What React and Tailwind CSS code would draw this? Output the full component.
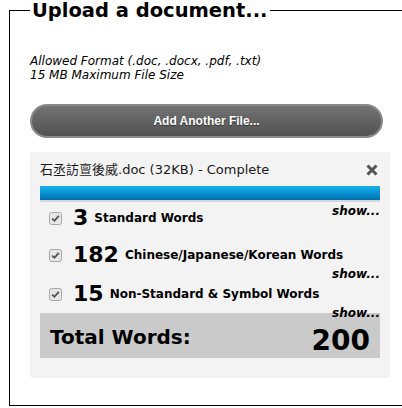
import React from 'react';

const rows = [
  { count: 3, label: 'Standard Words' },
  { count: 182, label: 'Chinese/Japanese/Korean Words' },
  { count: 15, label: 'Non-Standard & Symbol Words' },
];

const CheckBox = () => (
  <svg width="13" height="13" viewBox="0 0 13 13" className="shrink-0">
    <rect x="0.5" y="0.5" width="12" height="12" rx="2" fill="#e6e6e6" stroke="#a8a8a8" />
    <path d="M3.2 6.6 L5.4 8.8 L9.8 3.8" fill="none" stroke="#505050" strokeWidth="1.8" />
  </svg>
);

const ShowLink = ({ className = '' }) => (
  <div className={`text-right text-[12px] leading-[14px] font-bold italic text-black ${className}`}>show...</div>
);

const WordRow = ({ count, label }) => (
  <div className="flex items-center">
    <div className="ml-[9px] mr-[11px] flex items-center">
      <CheckBox />
    </div>
    <span className="text-[22px] leading-[24px] font-bold">{count}</span>
    <span className="ml-[6px] text-[12px] leading-[24px] font-bold">{label}</span>
  </div>
);

export default function App() {
  return (
    <div className="w-[402px] h-[408px] bg-white text-black font-['DejaVu_Sans',sans-serif] overflow-hidden">
      <fieldset className="-mt-px ml-[9px] w-[391px] h-[407px] border border-black px-[20px]">
        <legend className="px-[2px] pt-[2px] text-[19.5px] leading-[20px] font-bold">Upload a document...</legend>

        <div className="mt-[33px] text-[12px] leading-[14px] italic">
          <div>Allowed Format (.doc, .docx, .pdf, .txt)</div>
          <div>15 MB Maximum File Size</div>
        </div>

        <button className="mt-[22px] w-[353px] h-[34px] rounded-full border-2 border-[#8a8a8a] bg-linear-to-b from-[#737373] to-[#525252] text-white text-[12px] font-bold font-['Liberation_Sans',sans-serif] [text-shadow:0_1px_1px_#333]">
          Add Another File...
        </button>

        <div className="mt-[14px] w-[360px] h-[226px] bg-[#f3f3f3] rounded-[3px] px-[10px] pt-[10px]">
          <div className="flex items-center justify-between h-[16px]">
            <span className="text-[13px] leading-[16px] text-[#1a1a1a] font-['DejaVu_Sans','Noto_Sans_CJK_TC',sans-serif]">
              石丞訪亶後威.doc (32KB) - Complete
            </span>
            <svg width="12" height="12" viewBox="0 0 12 12" className="mr-[2px]">
              <path d="M1.5 1.5 L10.5 10.5 M10.5 1.5 L1.5 10.5" stroke="#555" strokeWidth="3" />
            </svg>
          </div>

          <div className="mt-[8px] h-[16px] border-b-2 border-[#d8d8d8] bg-linear-to-b from-[#16b2ee] to-[#0070b2]" />

          <div className="mt-[2px] flex items-start justify-between">
            <div className="pt-[2px]">
              <WordRow {...rows[0]} />
            </div>
            <ShowLink />
          </div>

          <div className="mt-[13px]">
            <WordRow {...rows[1]} />
          </div>
          <ShowLink />

          <div className="pt-[1px]">
            <WordRow {...rows[2]} />
          </div>
          <ShowLink className="h-[7px]" />

          <div className="h-[45px] bg-[#cacaca] flex items-start justify-between px-[10px] pt-[12px]">
            <span className="text-[20px] leading-[24px] font-bold">Total Words:</span>
            <span className="text-[28px] leading-[32px] font-bold">200</span>
          </div>
        </div>
      </fieldset>
    </div>
  );
}
